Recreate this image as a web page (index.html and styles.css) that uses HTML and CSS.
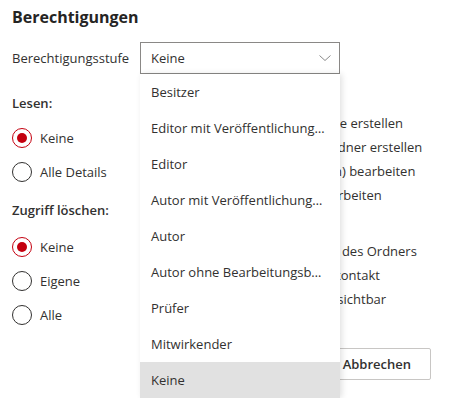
FILE: index.html
```html
<!DOCTYPE html>
<html lang="de">
<head>
<meta charset="utf-8">
<link rel="stylesheet" href="styles.css">
</head>
<body>
<div class="panel">
  <h2 class="title">Berechtigungen</h2>
  <div class="level-row">
    <span class="level-label">Berechtigungsstufe</span>
    <div class="select-wrap">
      <div class="select">
        <span>Keine</span>
        <svg class="chevron" width="12" height="6" viewBox="0 0 12 6"><path d="M0.5 0.5 L6 5.5 L11.5 0.5" fill="none" stroke="#8a8a8a" stroke-width="1"/></svg>
      </div>
      <ul class="menu">
        <li>Besitzer</li>
        <li>Editor mit Veröffentlichungsrechten</li>
        <li>Editor</li>
        <li>Autor mit Veröffentlichungsrechten</li>
        <li>Autor</li>
        <li>Autor ohne Bearbeitungsberechtigung</li>
        <li>Prüfer</li>
        <li>Mitwirkender</li>
        <li class="selected">Keine</li>
      </ul>
    </div>
  </div>
  <div class="columns">
    <div class="col-left">
      <div class="group-title">Lesen:</div>
      <div class="radio-row"><span class="radio checked"></span>Keine</div>
      <div class="radio-row"><span class="radio"></span>Alle Details</div>
      <div class="group-title second">Zugriff löschen:</div>
      <div class="radio-row"><span class="radio checked"></span>Keine</div>
      <div class="radio-row"><span class="radio"></span>Eigene</div>
      <div class="radio-row"><span class="radio"></span>Alle</div>
    </div>
    <div class="col-right">
      <div class="group-title first-r">Schreiben:</div>
      <div class="check-row"><span class="check"></span>Elemente erstellen</div>
      <div class="check-row"><span class="check"></span>Unterordner erstellen</div>
      <div class="check-row"><span class="check"></span>Eigene(n) bearbeiten</div>
      <div class="check-row"><span class="check"></span>Alle bearbeiten</div>
      <div class="group-title second-r">Sonstiges:</div>
      <div class="check-row"><span class="check"></span>Besitzer des Ordners</div>
      <div class="check-row"><span class="check"></span>Ordnerkontakt</div>
      <div class="check-row"><span class="check"></span>Ordner sichtbar</div>
    </div>
  </div>
  <div class="footer">
    <button class="btn primary">OK</button>
    <button class="btn">Abbrechen</button>
  </div>
</div>
</body>
</html>
```
FILE: styles.css
```css
html, body {
  margin: 0;
  padding: 0;
  background: #ffffff;
}
body {
  font-family: "Open Sans", "Noto Sans", sans-serif;
  font-size: 13px;
  color: #323130;
  width: 450px;
  height: 398px;
  overflow: hidden;
}
.panel {
  padding: 6px 12px 0 12px;
}
.title {
  margin: 0;
  font-size: 16px;
  font-weight: 700;
  line-height: 22px;
  color: #252423;
}
.level-row {
  display: flex;
  align-items: center;
  margin-top: 14px;
  gap: 10px;
}
.level-label {
  width: 118px;
  white-space: nowrap;
}
.select-wrap {
  position: relative;
}
.select {
  box-sizing: border-box;
  width: 200px;
  height: 32px;
  border: 1px solid #8a8886;
  display: flex;
  align-items: center;
  justify-content: space-between;
  padding: 0 8px 0 10px;
}
.chevron {
  display: block;
}
.menu {
  position: absolute;
  top: 32px;
  left: 0;
  width: 200px;
  margin: 0;
  padding: 0;
  list-style: none;
  background: #fff;
  box-shadow: 2px 0 6px rgba(0, 0, 0, 0.12);
  z-index: 5;
}
.menu li {
  height: 36px;
  line-height: 36px;
  padding: 0 13px 0 11px;
  white-space: nowrap;
  overflow: hidden;
  text-overflow: ellipsis;
}
.menu li.selected {
  background: #e1e1e1;
}
.columns {
  display: flex;
  margin-top: 19px;
}
.col-left {
  width: 252px;
  flex: none;
}
.group-title {
  font-weight: 600;
  line-height: 20px;
  white-space: nowrap;
}
.second {
  margin-top: 18px;
}
.radio-row {
  display: flex;
  align-items: center;
  gap: 8px;
  height: 20px;
  margin-top: 14px;
}
.group-title + .radio-row {
  margin-top: 15px;
}
.second + .radio-row {
  margin-top: 17px;
}
.radio {
  box-sizing: border-box;
  width: 20px;
  height: 20px;
  border-radius: 50%;
  border: 1px solid #323130;
  display: inline-flex;
  align-items: center;
  justify-content: center;
}
.radio.checked {
  border-color: #c4000f;
}
.radio.checked::after {
  content: "";
  width: 10px;
  height: 10px;
  border-radius: 50%;
  background: #c4000f;
}
.col-right {
  flex: 1;
}
.first-r {
  margin-bottom: -2px;
}
.check-row {
  display: flex;
  align-items: center;
  gap: 10px;
  height: 24px;
  white-space: nowrap;
}
.check {
  box-sizing: border-box;
  width: 16px;
  height: 16px;
  border: 1px solid #323130;
  flex: none;
}
.second-r {
  margin-top: 12px;
}
.footer {
  display: flex;
  justify-content: flex-end;
  gap: 8px;
  margin-top: 23px;
  padding-right: 7px;
}
.btn {
  font-family: inherit;
  font-size: 13px;
  font-weight: 600;
  height: 32px;
  padding: 0 19px;
  background: #fff;
  border: 1px solid #c8c6c4;
  border-radius: 2px;
  color: #323130;
}
.btn.primary {
  background: #c4000f;
  border-color: #c4000f;
  color: #fff;
}
```
